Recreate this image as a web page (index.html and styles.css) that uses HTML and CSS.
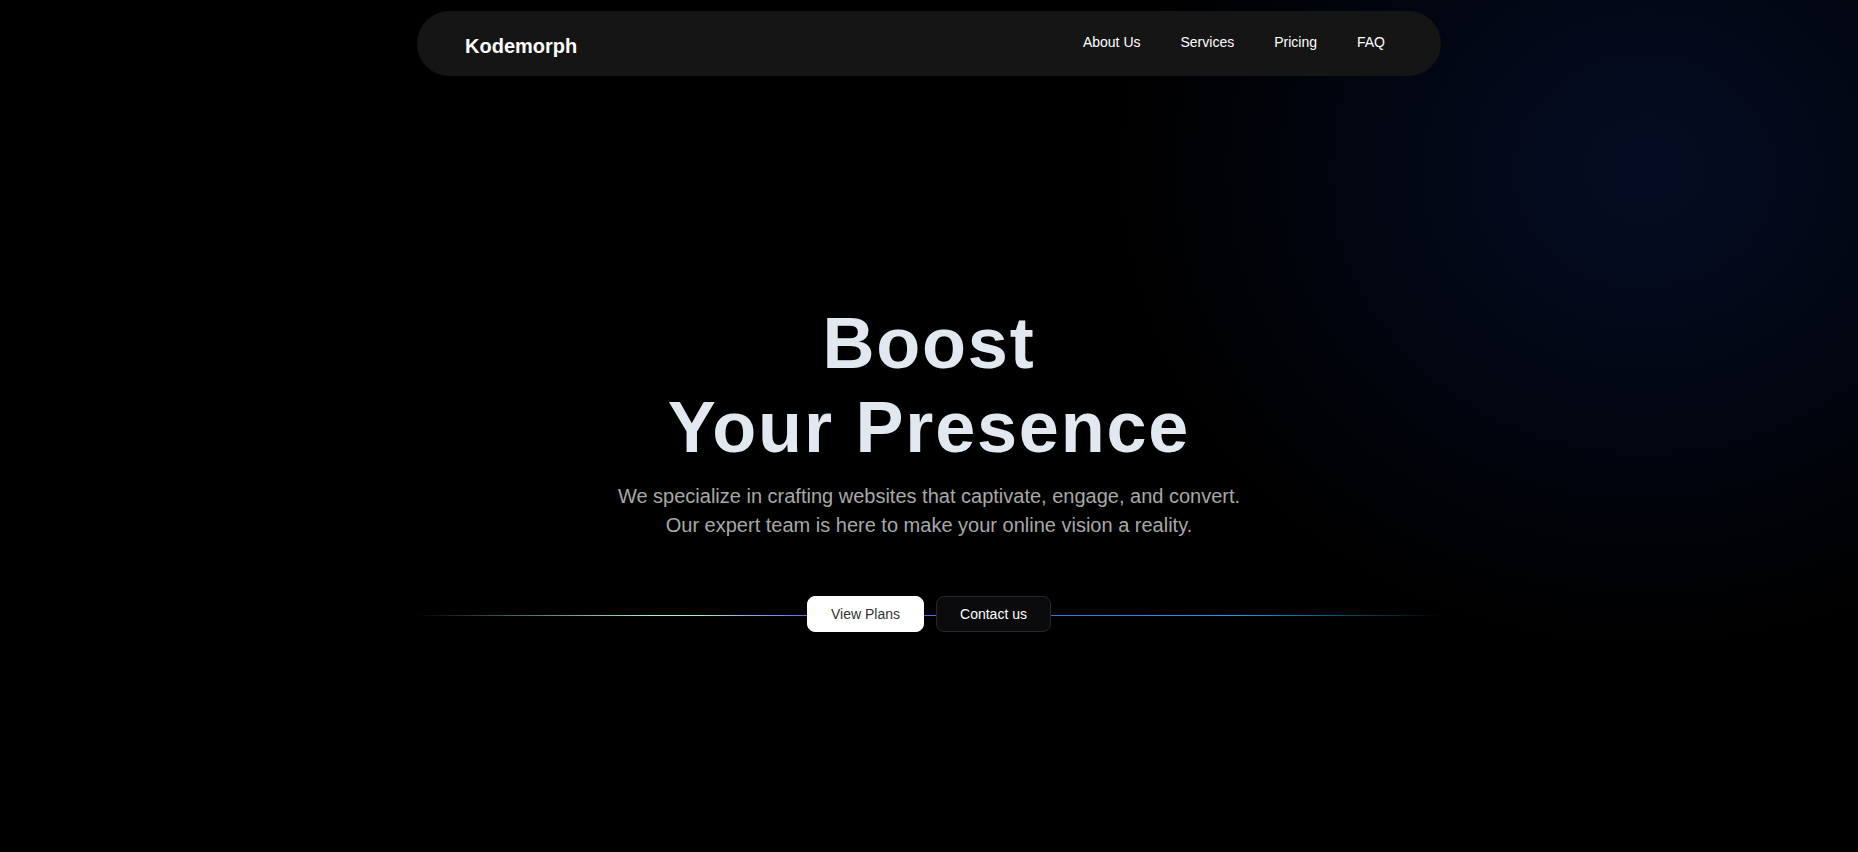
FILE: index.html
```html
<!DOCTYPE html>
<html lang="en">
<head>
<meta charset="utf-8">
<title>Kodemorph</title>
<link rel="stylesheet" href="styles.css">
</head>
<body>
<div class="page">
  <div class="container">
    <header class="navbar">
      <a class="logo" href="#">Kodemorph</a>
      <nav class="nav-links">
        <a href="#">About Us</a>
        <a href="#">Services</a>
        <a href="#">Pricing</a>
        <a href="#">FAQ</a>
      </nav>
    </header>
    <section class="hero">
      <h1 class="hero-title">Boost<br>Your Presence</h1>
      <p class="hero-text">We specialize in crafting websites that captivate, engage, and convert.<br>Our expert team is here to make your online vision a reality.</p>
      <div class="cta-row">
        <a class="btn btn-light" href="#">View Plans</a>
        <a class="btn btn-dark" href="#">Contact us</a>
      </div>
    </section>
  </div>
</div>
</body>
</html>
```

FILE: styles.css
```css
* { box-sizing: border-box; }

html, body {
  margin: 0;
  padding: 0;
  background: #000;
}

body {
  font-family: "Liberation Sans", Arial, sans-serif;
  color: #fff;
}

a { text-decoration: none; color: inherit; }

.page {
  min-height: 852px;
  background:
    radial-gradient(ellipse 520px 470px at 1645px 170px, #050c22 0%, #040a1c 25%, #02050f 60%, #000 100%),
    #000;
}

.container {
  width: 1024px;
  margin: 0 auto;
  padding-top: 11px;
}

.navbar {
  height: 65px;
  border-radius: 9999px;
  background: #151515;
  display: flex;
  align-items: center;
  justify-content: space-between;
  padding: 0 56px 0 48px;
}

.logo {
  font-size: 20px;
  font-weight: 700;
  color: #fff;
  margin-top: 5px;
}

.nav-links {
  display: flex;
  gap: 40px;
  margin-bottom: 3px;
}

.nav-links a {
  font-size: 14px;
  color: #fff;
}

.hero {
  margin-top: 225px;
  display: flex;
  flex-direction: column;
  align-items: center;
  text-align: center;
}

.hero-title {
  margin: 0;
  font-size: 72px;
  line-height: 84px;
  font-weight: 700;
  letter-spacing: 0.025em;
  color: #e2e8f0;
}

.hero-text {
  margin: 13px 0 0;
  font-size: 20px;
  line-height: 29px;
  color: #a8a8a8;
}

.cta-row {
  align-self: stretch;
  margin-top: 56px;
  display: flex;
  justify-content: center;
  gap: 12px;
  background-image: linear-gradient(90deg,
    rgba(0,0,0,0) 0%,
    #a7f3d0 23%,
    #a7f3d0 27%,
    #6366f1 38%,
    #3b6ff6 62%,
    #0ea5e9 80%,
    rgba(0,0,0,0) 100%);
  background-repeat: no-repeat;
  background-size: 100% 1px;
  background-position: 0 19px;
}

.btn {
  display: inline-block;
  height: 36px;
  padding: 7px 23px;
  font-size: 14px;
  line-height: 20px;
  border-radius: 8px;
  border: 1px solid transparent;
}

.btn-light {
  background: #fff;
  border-color: #fff;
  color: #333;
}

.btn-dark {
  background: #0b0b0d;
  border-color: #27272a;
  color: #fff;
}
```
